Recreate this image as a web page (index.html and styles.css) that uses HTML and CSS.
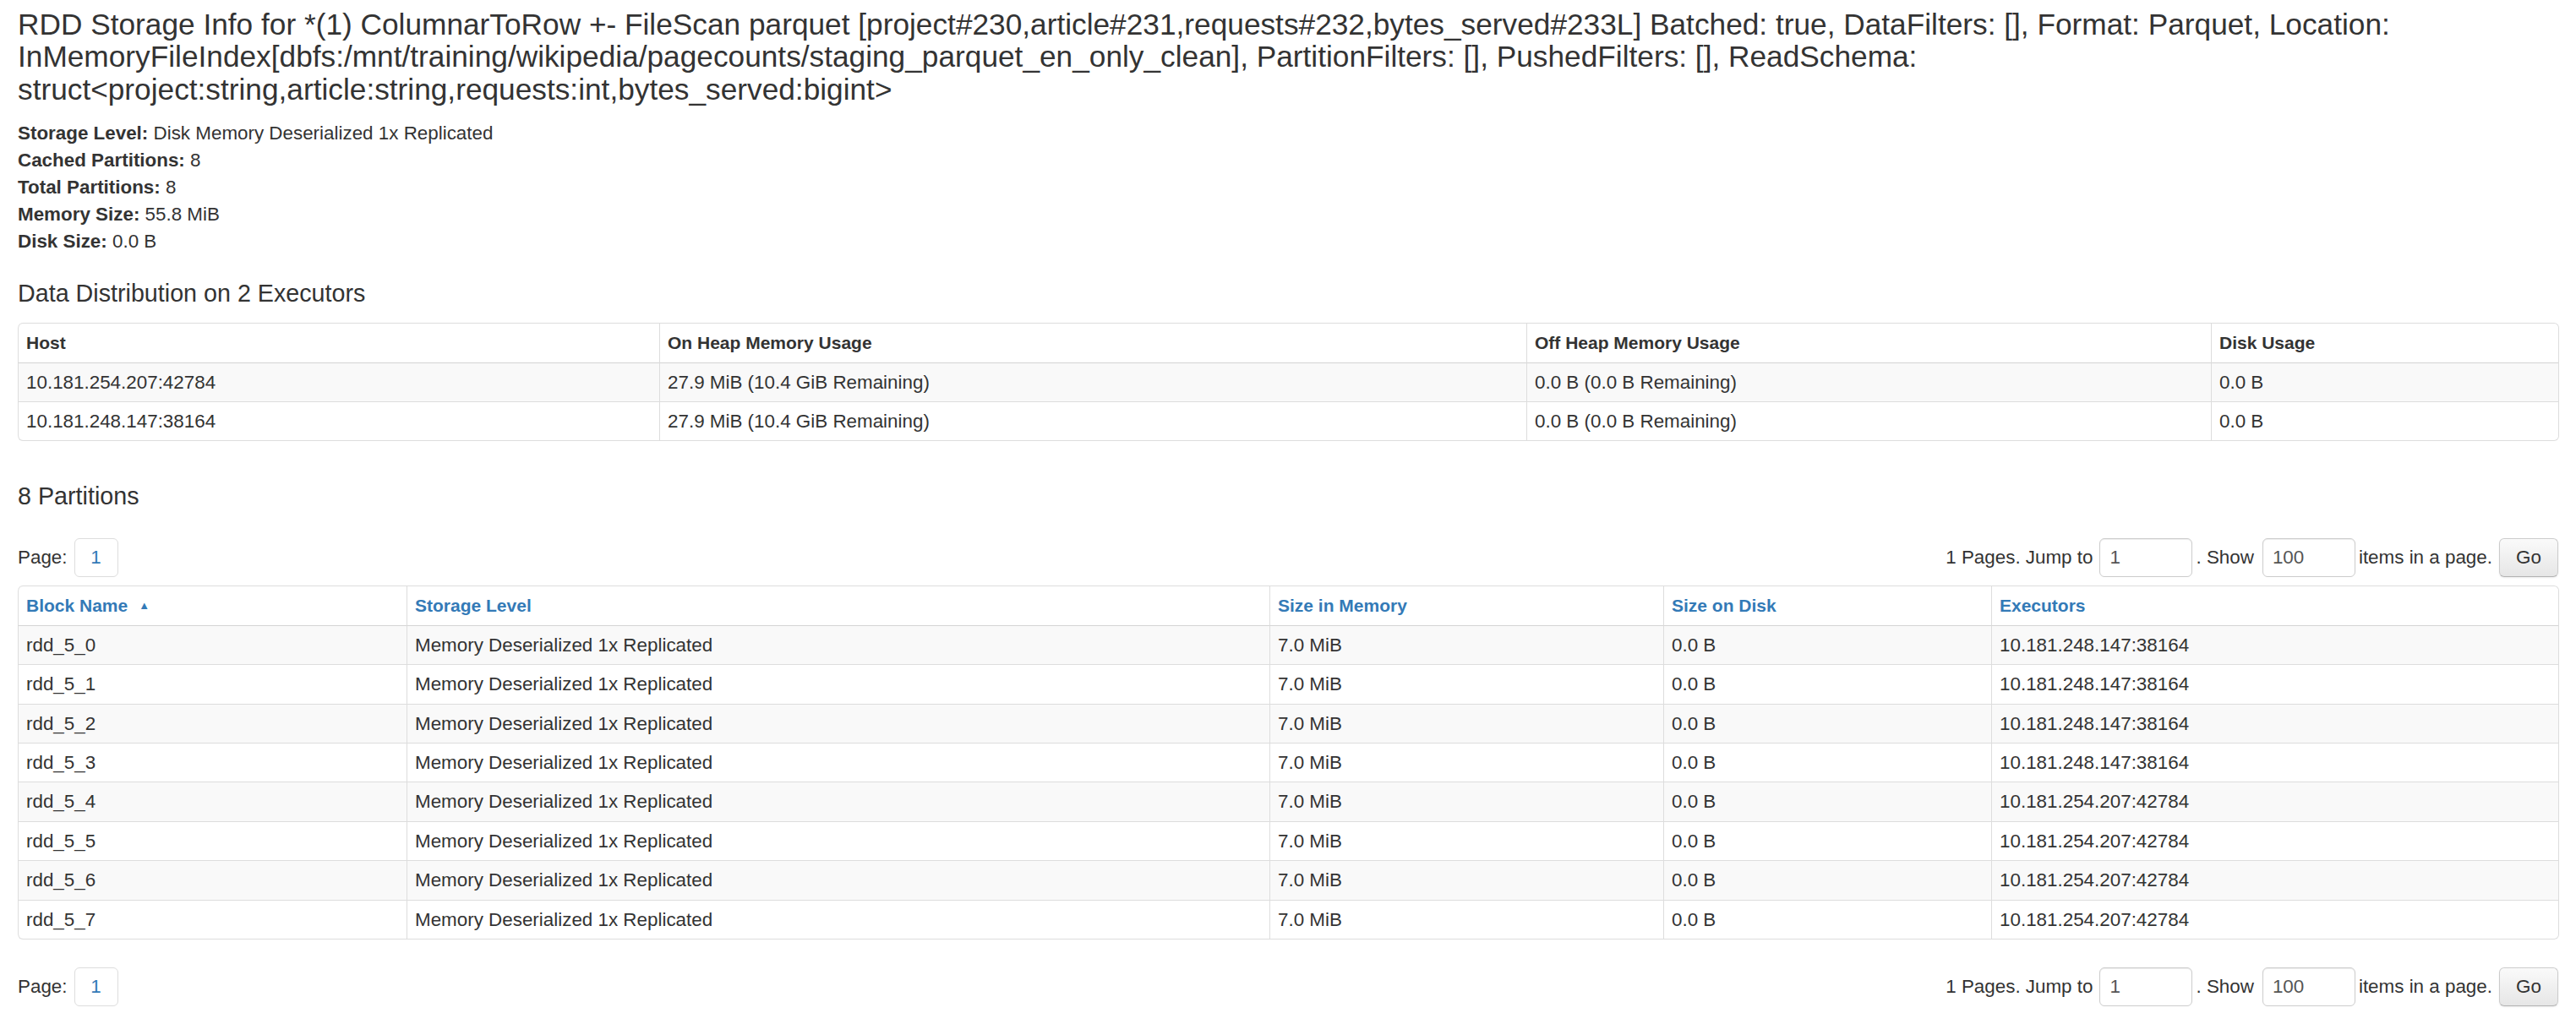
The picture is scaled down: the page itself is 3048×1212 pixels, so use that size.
FILE: index.html
```html
<!DOCTYPE html>
<html>
<head>
<meta charset="utf-8">
<link rel="stylesheet" href="styles.css">
</head>
<body>
<div class="page">
  <h3 class="title">RDD Storage Info for *(1) ColumnarToRow +- FileScan parquet [project#230,article#231,requests#232,bytes_served#233L] Batched: true, DataFilters: [], Format: Parquet, Location: InMemoryFileIndex[dbfs:/mnt/training/wikipedia/pagecounts/staging_parquet_en_only_clean], PartitionFilters: [], PushedFilters: [], ReadSchema: struct&lt;project:string,article:string,requests:int,bytes_served:bigint&gt;</h3>

  <ul class="summary">
    <li><strong>Storage Level:</strong> Disk Memory Deserialized 1x Replicated</li>
    <li><strong>Cached Partitions:</strong> 8</li>
    <li><strong>Total Partitions:</strong> 8</li>
    <li><strong>Memory Size:</strong> 55.8 MiB</li>
    <li><strong>Disk Size:</strong> 0.0 B</li>
  </ul>

  <h4 class="section-title">Data Distribution on 2 Executors</h4>
  <table class="grid">
    <colgroup>
      <col class="w-host"><col class="w-onheap"><col class="w-offheap"><col class="w-disk">
    </colgroup>
    <thead>
      <tr><th>Host</th><th>On Heap Memory Usage</th><th>Off Heap Memory Usage</th><th>Disk Usage</th></tr>
    </thead>
    <tbody>
      <tr><td>10.181.254.207:42784</td><td>27.9 MiB (10.4 GiB Remaining)</td><td>0.0 B (0.0 B Remaining)</td><td>0.0 B</td></tr>
      <tr><td>10.181.248.147:38164</td><td>27.9 MiB (10.4 GiB Remaining)</td><td>0.0 B (0.0 B Remaining)</td><td>0.0 B</td></tr>
    </tbody>
  </table>

  <h4 class="section-title partitions-title">8 Partitions</h4>

  <div class="pager">
    <div class="pager-left">
      <span>Page:</span>
      <span class="page-box">1</span>
    </div>
    <div class="pager-right">
      <span>1 Pages. Jump to</span>
      <span class="field">1</span>
      <span class="dot-show">. Show</span>
      <span class="field">100</span>
      <span>items in a page.</span>
      <span class="go">Go</span>
    </div>
  </div>

  <table class="grid sortable">
    <colgroup>
      <col class="w-block"><col class="w-level"><col class="w-mem"><col class="w-sdisk"><col class="w-exec">
    </colgroup>
    <thead>
      <tr>
        <th><a>Block Name</a><span class="arrow">&#9650;</span></th>
        <th><a>Storage Level</a></th>
        <th><a>Size in Memory</a></th>
        <th><a>Size on Disk</a></th>
        <th><a>Executors</a></th>
      </tr>
    </thead>
    <tbody>
      <tr><td>rdd_5_0</td><td>Memory Deserialized 1x Replicated</td><td>7.0 MiB</td><td>0.0 B</td><td>10.181.248.147:38164</td></tr>
      <tr><td>rdd_5_1</td><td>Memory Deserialized 1x Replicated</td><td>7.0 MiB</td><td>0.0 B</td><td>10.181.248.147:38164</td></tr>
      <tr><td>rdd_5_2</td><td>Memory Deserialized 1x Replicated</td><td>7.0 MiB</td><td>0.0 B</td><td>10.181.248.147:38164</td></tr>
      <tr><td>rdd_5_3</td><td>Memory Deserialized 1x Replicated</td><td>7.0 MiB</td><td>0.0 B</td><td>10.181.248.147:38164</td></tr>
      <tr><td>rdd_5_4</td><td>Memory Deserialized 1x Replicated</td><td>7.0 MiB</td><td>0.0 B</td><td>10.181.254.207:42784</td></tr>
      <tr><td>rdd_5_5</td><td>Memory Deserialized 1x Replicated</td><td>7.0 MiB</td><td>0.0 B</td><td>10.181.254.207:42784</td></tr>
      <tr><td>rdd_5_6</td><td>Memory Deserialized 1x Replicated</td><td>7.0 MiB</td><td>0.0 B</td><td>10.181.254.207:42784</td></tr>
      <tr><td>rdd_5_7</td><td>Memory Deserialized 1x Replicated</td><td>7.0 MiB</td><td>0.0 B</td><td>10.181.254.207:42784</td></tr>
    </tbody>
  </table>

  <div class="pager pager-bottom">
    <div class="pager-left">
      <span>Page:</span>
      <span class="page-box">1</span>
    </div>
    <div class="pager-right">
      <span>1 Pages. Jump to</span>
      <span class="field">1</span>
      <span class="dot-show">. Show</span>
      <span class="field">100</span>
      <span>items in a page.</span>
      <span class="go">Go</span>
    </div>
  </div>
</div>
</body>
</html>
```

FILE: styles.css
```css
html, body {
  margin: 0;
  padding: 0;
  background: #ffffff;
}

body {
  font-family: "Liberation Sans", Arial, sans-serif;
  color: #333333;
  font-size: 22.4px;
}

.page {
  padding: 10px 21px 0 21px;
}

.title {
  margin: 0;
  font-size: 35.25px;
  line-height: 38.4px;
  font-weight: normal;
  color: #333333;
}

.summary {
  list-style: none;
  margin: 17px 0 0 0;
  padding: 0;
  font-size: 22.4px;
  line-height: 32px;
}

.summary strong {
  font-weight: bold;
}

.section-title {
  margin: 29px 0 19px 0;
  font-size: 28.7px;
  line-height: 32px;
  font-weight: normal;
}

.partitions-title {
  margin-top: 49px;
  margin-bottom: 34px;
}

.grid {
  width: 100%;
  table-layout: fixed;
  border-collapse: separate;
  border-spacing: 0;
  border: 1px solid #dddddd;
  border-left: 0;
  border-radius: 6px;
  font-size: 22.4px;
}

.grid th,
.grid td {
  text-align: left;
  padding: 8px 9px;
  line-height: 29.4px;
  border-left: 1px solid #dddddd;
  border-top: 1px solid #dddddd;
  white-space: nowrap;
  overflow: hidden;
}

.grid thead th {
  border-top: 0;
  font-weight: bold;
  font-size: 21px;
}

.grid tbody tr:first-child td {
  border-top: 1px solid #d4d4d4;
}

.grid tbody tr:nth-child(odd) td {
  background: #f9f9f9;
}

.grid thead th:first-child {
  border-top-left-radius: 6px;
}

.grid tbody tr:last-child td:first-child {
  border-bottom-left-radius: 6px;
}

.sortable th a {
  color: #337ab7;
  text-decoration: none;
}

.arrow {
  color: #337ab7;
  font-size: 13px;
  margin-left: 13px;
  vertical-align: 3px;
}

.w-host { width: 759px; }
.w-onheap { width: 1026px; }
.w-offheap { width: 810px; }
.w-disk { width: 411px; }

.w-block { width: 460px; }
.w-level { width: 1021px; }
.w-mem { width: 466px; }
.w-sdisk { width: 388px; }
.w-exec { width: 671px; }

.pager {
  display: flex;
  justify-content: space-between;
  align-items: center;
  height: 46px;
  margin-bottom: 10px;
  font-size: 22.4px;
}

.pager-bottom {
  margin-top: 33px;
}

.pager-left,
.pager-right {
  display: flex;
  align-items: center;
}

.page-box {
  display: flex;
  align-items: center;
  justify-content: center;
  box-sizing: border-box;
  width: 52px;
  height: 46px;
  margin-left: 8px;
  border: 1px solid #dddddd;
  border-radius: 6px;
  color: #337ab7;
}

.field {
  display: flex;
  align-items: center;
  box-sizing: border-box;
  width: 110px;
  height: 46px;
  padding-left: 11px;
  margin: 0 4px 0 8px;
  border: 1px solid #cccccc;
  border-radius: 6px;
  color: #555555;
  box-shadow: inset 0 1px 1px rgba(0, 0, 0, 0.075);
}

.dot-show {
  margin-right: 2px;
}

.go {
  display: flex;
  align-items: center;
  justify-content: center;
  box-sizing: border-box;
  width: 70px;
  height: 46px;
  margin-left: 8px;
  border: 1px solid #cccccc;
  border-bottom-color: #b3b3b3;
  border-radius: 6px;
  background: linear-gradient(#fafafa, #e6e6e6);
  color: #333333;
  box-shadow: 0 1px 2px rgba(0, 0, 0, 0.08);
}
```
